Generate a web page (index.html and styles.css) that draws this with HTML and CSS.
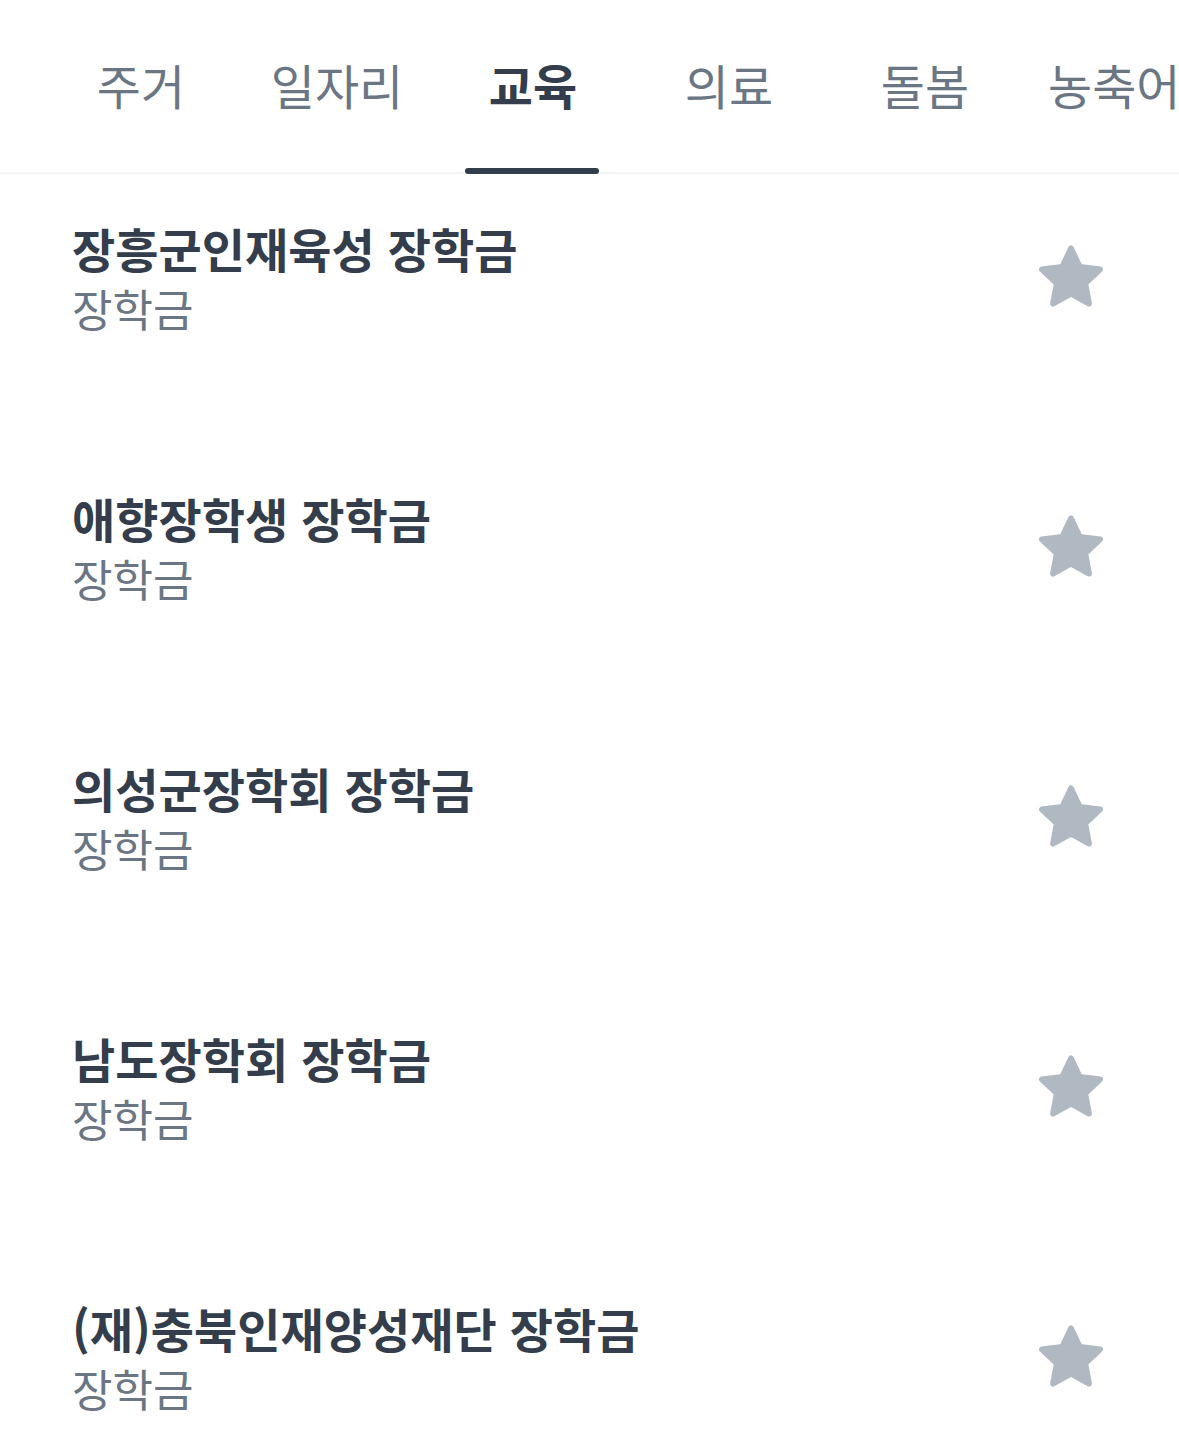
FILE: index.html
```html
<!DOCTYPE html>
<html lang="ko">
<head>
    <meta charset="UTF-8">
    <meta name="viewport" content="width=device-width, initial-scale=1.0">
    <title>교육</title>
    <link rel="stylesheet" href="styles.css">
</head>
<body>
    <div class="tabs">
        <div class="tab"><span class="label">주거</span></div>
        <div class="tab"><span class="label">일자리</span></div>
        <div class="tab active"><span class="label">교육</span></div>
        <div class="tab"><span class="label">의료</span></div>
        <div class="tab"><span class="label">돌봄</span></div>
        <div class="tab last"><span class="label">농축어업</span></div>
    </div>
    <div class="list">
        <div class="item">
            <div class="info">
                <div class="title">장흥군인재육성 장학금</div>
                <div class="sub">장학금</div>
            </div>
            <svg class="star" viewBox="0 0 24 24"><polygon points="12,2.6 14.8,8.5 21.2,9.3 16.5,13.7 17.7,20.1 12,17 6.3,20.1 7.5,13.7 2.8,9.3 9.2,8.5"/></svg>
        </div>
        <div class="item">
            <div class="info">
                <div class="title">애향장학생 장학금</div>
                <div class="sub">장학금</div>
            </div>
            <svg class="star" viewBox="0 0 24 24"><polygon points="12,2.6 14.8,8.5 21.2,9.3 16.5,13.7 17.7,20.1 12,17 6.3,20.1 7.5,13.7 2.8,9.3 9.2,8.5"/></svg>
        </div>
        <div class="item">
            <div class="info">
                <div class="title">의성군장학회 장학금</div>
                <div class="sub">장학금</div>
            </div>
            <svg class="star" viewBox="0 0 24 24"><polygon points="12,2.6 14.8,8.5 21.2,9.3 16.5,13.7 17.7,20.1 12,17 6.3,20.1 7.5,13.7 2.8,9.3 9.2,8.5"/></svg>
        </div>
        <div class="item">
            <div class="info">
                <div class="title">남도장학회 장학금</div>
                <div class="sub">장학금</div>
            </div>
            <svg class="star" viewBox="0 0 24 24"><polygon points="12,2.6 14.8,8.5 21.2,9.3 16.5,13.7 17.7,20.1 12,17 6.3,20.1 7.5,13.7 2.8,9.3 9.2,8.5"/></svg>
        </div>
        <div class="item">
            <div class="info">
                <div class="title">(재)충북인재양성재단 장학금</div>
                <div class="sub">장학금</div>
            </div>
            <svg class="star" viewBox="0 0 24 24"><polygon points="12,2.6 14.8,8.5 21.2,9.3 16.5,13.7 17.7,20.1 12,17 6.3,20.1 7.5,13.7 2.8,9.3 9.2,8.5"/></svg>
        </div>
    </div>
</body>
</html>
```

FILE: styles.css
```css
body {
    margin: 0;
    background: #fff;
    font-family: "Noto Sans CJK KR", "Noto Sans", sans-serif;
    overflow: hidden;
}

.tabs {
    display: flex;
    height: 172px;
    padding-left: 42px;
    border-bottom: 2px solid #f2f4f6;
    overflow-x: clip;
    overflow-y: visible;
}
.tab {
    flex-shrink: 0;
    width: 196px;
    display: flex;
    justify-content: center;
}
.tab.last {
    justify-content: flex-start;
    padding-left: 2px;
}
.tab .label {
    position: relative;
    padding: 42px 22px 0 24px;
    font-size: 48px;
    line-height: 84px;
    color: #6b7684;
    white-space: nowrap;
}
.tab.active .label {
    color: #333d4b;
    font-weight: bold;
}
.tab.active .label::after {
    content: "";
    position: absolute;
    left: 0;
    right: 0;
    bottom: -2px;
    height: 6px;
    border-radius: 3px;
    background: #333d4b;
}

.list {
    display: flex;
    flex-direction: column;
    gap: 150px;
    padding: 44px 70px 0 72px;
}
.item {
    display: flex;
    align-items: center;
    justify-content: space-between;
    height: 120px;
}
.title {
    font-size: 47px;
    line-height: 60px;
    font-weight: bold;
    color: #333d4b;
}
.sub {
    font-size: 44px;
    line-height: 60px;
    color: #6b7684;
}
.star {
    width: 76px;
    height: 76px;
}
.star polygon {
    fill: #b0b8c1;
    stroke: #b0b8c1;
    stroke-width: 1.8;
    stroke-linejoin: round;
}
```
